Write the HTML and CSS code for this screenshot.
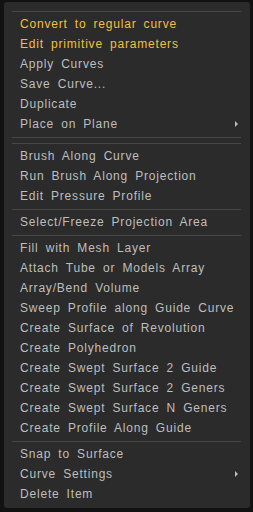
FILE: index.html
```html
<!DOCTYPE html>
<html>
<head>
<meta charset="utf-8">
<link rel="stylesheet" href="styles.css">
</head>
<body>
<div class="menu">
  <div class="sep"></div>
  <div class="item hl">Convert to regular curve</div>
  <div class="item hl">Edit primitive parameters</div>
  <div class="item">Apply Curves</div>
  <div class="item">Save Curve...</div>
  <div class="item">Duplicate</div>
  <div class="item sub">Place on Plane</div>
  <div class="sep"></div>
  <div class="sep"></div>
  <div class="item">Brush Along Curve</div>
  <div class="item">Run Brush Along Projection</div>
  <div class="item">Edit Pressure Profile</div>
  <div class="sep"></div>
  <div class="item">Select/Freeze Projection Area</div>
  <div class="sep"></div>
  <div class="item">Fill with Mesh Layer</div>
  <div class="item">Attach Tube or Models Array</div>
  <div class="item">Array/Bend Volume</div>
  <div class="item">Sweep Profile along Guide Curve</div>
  <div class="item">Create Surface of Revolution</div>
  <div class="item">Create Polyhedron</div>
  <div class="item">Create Swept Surface 2 Guide</div>
  <div class="item">Create Swept Surface 2 Geners</div>
  <div class="item">Create Swept Surface N Geners</div>
  <div class="item">Create Profile Along Guide</div>
  <div class="sep"></div>
  <div class="item">Snap to Surface</div>
  <div class="item sub">Curve Settings</div>
  <div class="item">Delete Item</div>
</div>
</body>
</html>
```
FILE: styles.css
```css
html, body {
  margin: 0;
  padding: 0;
  background: #121212;
  width: 253px;
  height: 512px;
  overflow: hidden;
}
body {
  padding: 2px 3px 0 4px;
  box-sizing: border-box;
}
.menu {
  width: 246px;
  box-sizing: border-box;
  background: #2b2b2b;
  border-radius: 3px;
  padding: 0 0 4px 0;
  font-family: "Liberation Sans", Arial, sans-serif;
  font-size: 12px;
  letter-spacing: 0.8px;
  word-spacing: 3px;
  color: #bebebe;
}
.menu > .sep:first-child {
  height: 12px;
}
.sep {
  height: 6px;
  display: flex;
  flex-direction: column;
  justify-content: flex-end;
  padding: 0 9px 2px 8px;
  box-sizing: border-box;
}
.sep::after {
  content: "";
  display: block;
  height: 1px;
  background: #474747;
}
.item {
  height: 20px;
  line-height: 20px;
  padding-left: 16px;
  white-space: nowrap;
  position: relative;
}
.item.hl {
  color: #f2c03a;
}
.item.sub::after {
  content: "";
  position: absolute;
  right: 12px;
  top: 7px;
  border-left: 3px solid #bdbdbd;
  border-top: 3px solid transparent;
  border-bottom: 3px solid transparent;
}
```
